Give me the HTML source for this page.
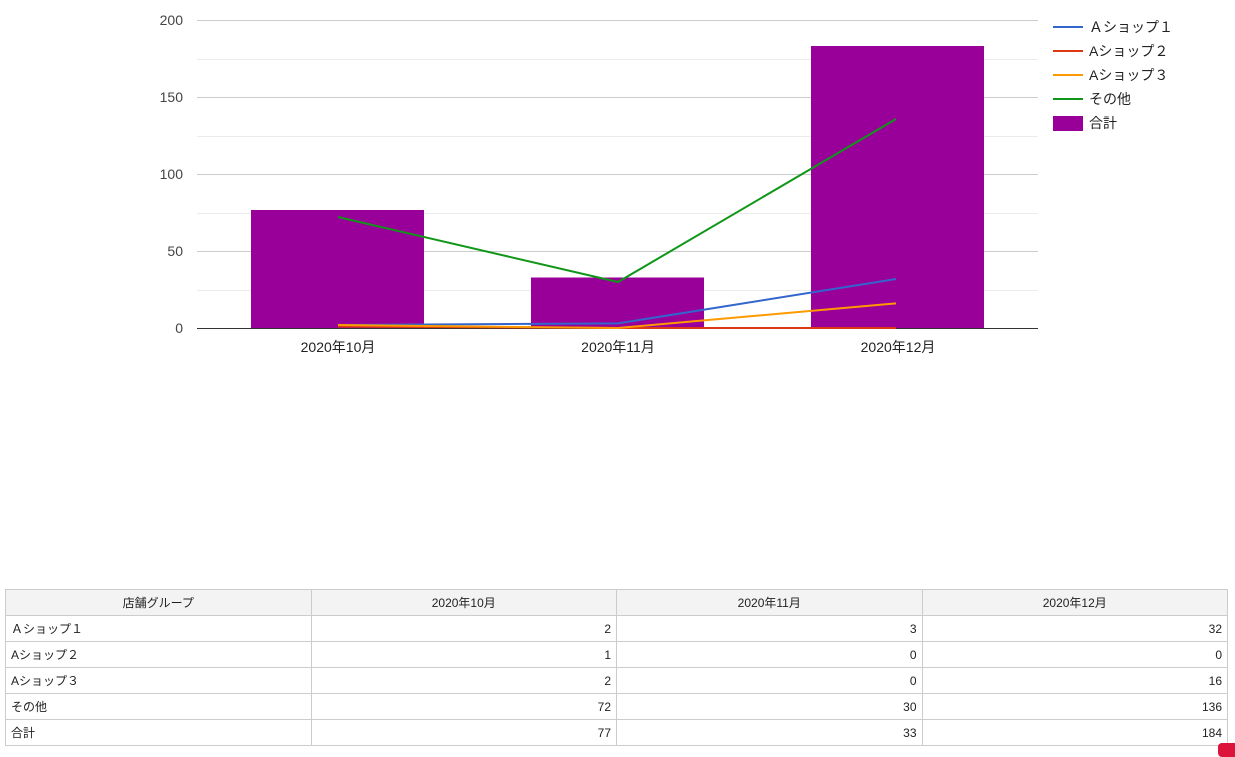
<!DOCTYPE html>
<html><head><meta charset="utf-8"><style>
body{margin:0;width:1235px;height:753px;background:#fff;overflow:hidden;font-family:"Liberation Sans","Noto Sans CJK JP",sans-serif;position:relative}
svg text{font-family:"Liberation Sans","Noto Sans CJK JP",sans-serif}
table{position:absolute;left:5px;top:589px;width:1223px;border-collapse:collapse;font-size:12px;color:#222;table-layout:fixed}
td,th{border:1px solid #ccc;height:25px;padding:0 5px;font-weight:normal}
th{background:#f3f3f3;text-align:center}
td.n{text-align:right}
</style></head><body>
<svg width="1235" height="400" style="position:absolute;left:0;top:0">
<g stroke="#ebebeb" stroke-width="1">
<line x1="197" x2="1038" y1="59.5" y2="59.5"/><line x1="197" x2="1038" y1="136.5" y2="136.5"/><line x1="197" x2="1038" y1="213.5" y2="213.5"/><line x1="197" x2="1038" y1="290.5" y2="290.5"/>
</g>
<g stroke="#ccc" stroke-width="1">
<line x1="197" x2="1038" y1="20.5" y2="20.5"/><line x1="197" x2="1038" y1="97.5" y2="97.5"/><line x1="197" x2="1038" y1="174.5" y2="174.5"/><line x1="197" x2="1038" y1="251.5" y2="251.5"/>
</g>
<g fill="#444" font-size="14" text-anchor="end">
<text x="183" y="25">200</text><text x="183" y="102">150</text><text x="183" y="179">100</text><text x="183" y="256">50</text><text x="183" y="333">0</text>
</g>
<g fill="#990099">
<rect x="251" y="210" width="173" height="118"/><rect x="531" y="277.5" width="173" height="50.5"/><rect x="811" y="46" width="173" height="282"/>
</g>
<line x1="197" x2="1038" y1="328.5" y2="328.5" stroke="#333"/>
<g fill="none" stroke-width="2">
<polyline stroke="#dc3912" points="338,326.5 618,328 896,328"/>
<polyline stroke="#3366cc" points="338,325 618,323.4 896,279"/>
<polyline stroke="#ff9900" points="338,325 618,328 896,303.4"/>
<polyline stroke="#109618" points="338,217 618,282 896,119"/>
</g>
<g fill="#222" font-size="14" text-anchor="middle">
<text x="338" y="352">2020年10月</text><text x="618" y="352">2020年11月</text><text x="898" y="352">2020年12月</text>
</g>
<g font-size="14" fill="#222">
<line x1="1053" x2="1083" y1="27" y2="27" stroke="#3366cc" stroke-width="2"/><text x="1089" y="32">Ａショップ１</text>
<line x1="1053" x2="1083" y1="51" y2="51" stroke="#dc3912" stroke-width="2"/><text x="1089" y="56">Aショップ２</text>
<line x1="1053" x2="1083" y1="75" y2="75" stroke="#ff9900" stroke-width="2"/><text x="1089" y="80">Aショップ３</text>
<line x1="1053" x2="1083" y1="99" y2="99" stroke="#109618" stroke-width="2"/><text x="1089" y="104">その他</text>
<rect x="1053" y="116" width="30" height="15" fill="#990099"/><text x="1089" y="128">合計</text>
</g>
</svg>
<table>
<tr><th>店舗グループ</th><th>2020年10月</th><th>2020年11月</th><th>2020年12月</th></tr>
<tr><td>Ａショップ１</td><td class="n">2</td><td class="n">3</td><td class="n">32</td></tr>
<tr><td>Aショップ２</td><td class="n">1</td><td class="n">0</td><td class="n">0</td></tr>
<tr><td>Aショップ３</td><td class="n">2</td><td class="n">0</td><td class="n">16</td></tr>
<tr><td>その他</td><td class="n">72</td><td class="n">30</td><td class="n">136</td></tr>
<tr><td>合計</td><td class="n">77</td><td class="n">33</td><td class="n">184</td></tr>
</table>
<div style="position:absolute;left:1218px;top:743px;width:20px;height:14px;background:#dc143c;border-radius:4px"></div>
</body></html>
